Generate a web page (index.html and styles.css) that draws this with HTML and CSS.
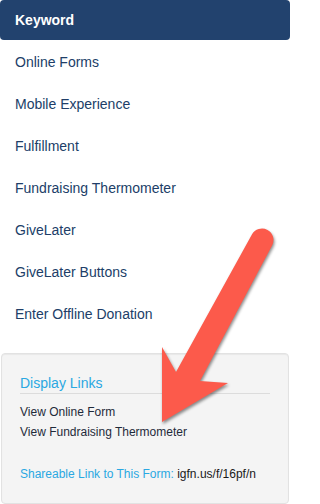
FILE: index.html
```html
<!DOCTYPE html>
<html>
<head>
<meta charset="utf-8">
<link rel="stylesheet" href="styles.css">
</head>
<body>
<div class="page">
  <ul class="nav">
    <li class="active"><a>Keyword</a></li>
    <li><a>Online Forms</a></li>
    <li><a>Mobile Experience</a></li>
    <li><a>Fulfillment</a></li>
    <li><a>Fundraising Thermometer</a></li>
    <li><a>GiveLater</a></li>
    <li><a>GiveLater Buttons</a></li>
    <li><a>Enter Offline Donation</a></li>
  </ul>
  <div class="well">
    <h4 class="well-title">Display Links</h4>
    <ul class="links">
      <li>View Online Form</li>
      <li>View Fundraising Thermometer</li>
    </ul>
    <p class="share"><span class="share-label">Shareable Link to This Form:</span> igfn.us/f/16pf/n</p>
  </div>
  <svg class="arrow" width="290" height="504" viewBox="0 0 290 504">
    <path d="M176 372 L162 347 L162 422 L228 383 L200 381 L272.1 245.5 A11.5 11.5 0 0 0 251.9 234.5 Z" fill="#fc5a4b"/>
  </svg>
</div>
</body>
</html>
```
FILE: styles.css
```css
html, body {
  margin: 0;
  padding: 0;
  background: #fff;
}
.page {
  position: relative;
  width: 290px;
  height: 504px;
  overflow: hidden;
  font-family: "Liberation Sans", Arial, sans-serif;
}
.nav {
  list-style: none;
  margin: 0;
  padding: 0;
  display: flex;
  flex-direction: column;
  gap: 2px;
}
.nav a {
  display: block;
  padding: 10px 15px;
  font-size: 14px;
  line-height: 20px;
  color: #203e68;
  border-radius: 4px;
}
.nav .active a {
  background: #22426e;
  color: #fff;
  font-weight: bold;
}
.well {
  margin: 19px 1px 0;
  padding: 19px 18px;
  background: #f4f4f4;
  border: 1px solid #e2e2e2;
  border-radius: 4px;
  box-shadow: inset 0 1px 1px rgba(0,0,0,0.05);
}
.well-title {
  margin: 0;
  font-size: 14px;
  line-height: 20px;
  font-weight: normal;
  color: #2aa8e2;
  border-bottom: 1px solid #dcdcdc;
}
.links {
  list-style: none;
  margin: 8px 0 0;
  padding: 0;
  font-size: 12px;
  line-height: 20px;
  color: #1f2a3a;
}
.share {
  margin: 22px 0 0;
  font-size: 12px;
  line-height: 20px;
  color: #1a1a1a;
}
.share-label {
  color: #2aa8e2;
}
.arrow {
  position: absolute;
  left: 0;
  top: 0;
  pointer-events: none;
  filter: drop-shadow(1px 2px 1.5px rgba(0,0,0,0.45));
}
```
